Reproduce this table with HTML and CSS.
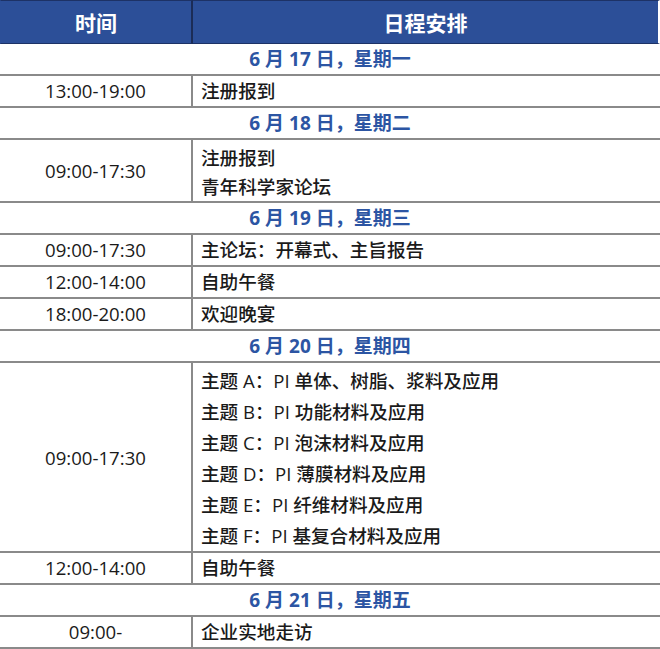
FILE: index.html
```html
<!DOCTYPE html>
<html lang="zh-CN">
<head>
<meta charset="utf-8">
<title>日程安排</title>
<link rel="stylesheet" href="styles.css">
</head>
<body>
<table class="schedule">
  <colgroup><col class="c-time"><col class="c-items"></colgroup>
  <thead>
    <tr><th class="h-time">时间</th><th class="h-items">日程安排</th></tr>
  </thead>
  <tbody>
    <tr class="day"><td colspan="2">6 月 17 日，星期一</td></tr>
    <tr class="single"><td class="time">13:00-19:00</td><td class="items">注册报到</td></tr>

    <tr class="day"><td colspan="2">6 月 18 日，星期二</td></tr>
    <tr><td class="time">09:00-17:30</td><td class="items multi two"><div class="item">注册报到</div><div class="item">青年科学家论坛</div></td></tr>

    <tr class="day"><td colspan="2">6 月 19 日，星期三</td></tr>
    <tr class="single"><td class="time">09:00-17:30</td><td class="items">主论坛：开幕式、主旨报告</td></tr>
    <tr class="single"><td class="time">12:00-14:00</td><td class="items">自助午餐</td></tr>
    <tr class="single"><td class="time">18:00-20:00</td><td class="items">欢迎晚宴</td></tr>

    <tr class="day"><td colspan="2">6 月 20 日，星期四</td></tr>
    <tr><td class="time">09:00-17:30</td><td class="items multi six">
      <div class="item">主题 A：PI 单体、树脂、浆料及应用</div>
      <div class="item">主题 B：PI 功能材料及应用</div>
      <div class="item">主题 C：PI 泡沫材料及应用</div>
      <div class="item">主题 D：PI 薄膜材料及应用</div>
      <div class="item">主题 E：PI 纤维材料及应用</div>
      <div class="item">主题 F：PI 基复合材料及应用</div>
    </td></tr>
    <tr class="single"><td class="time">12:00-14:00</td><td class="items">自助午餐</td></tr>

    <tr class="day"><td colspan="2">6 月 21 日，星期五</td></tr>
    <tr class="single"><td class="time">09:00-</td><td class="items">企业实地走访</td></tr>
  </tbody>
</table>
</body>
</html>
```

FILE: styles.css
```css
html, body {
  margin: 0;
  padding: 0;
  background: #ffffff;
}

body {
  font-family: "Open Sans", "Noto Sans CJK SC", sans-serif;
  color: #1a1a1a;
}

.schedule {
  width: 660px;
  table-layout: fixed;
  border-collapse: separate;
  border-spacing: 0;
}

.c-time { width: 193px; }

.schedule th {
  height: 42px;
  padding: 0;
  background: #2c4f98;
  color: #ffffff;
  font-size: 21px;
  font-weight: 700;
  text-align: center;
  vertical-align: middle;
  border-top: 1px solid #1d3266;
  border-bottom: 1px solid #1d3266;
}

.schedule th.h-time {
  border-right: 2px solid #1b2c57;
  border-left: 1px solid #2c4f98;
}

.schedule th.h-items {
  border-right: 2px solid #ffffff;
}

.schedule td {
  padding: 0;
  font-size: 18.6px;
  font-weight: 500;
  border-bottom: 2px solid #8a8a8a;
}

.day td {
  height: 30px;
  line-height: 30px;
  text-align: center;
  font-size: 19px;
  font-weight: 700;
  color: #2c55a3;
}

.single td {
  height: 30px;
  line-height: 30px;
}

.time {
  text-align: center;
  vertical-align: middle;
  border-right: 2px solid #8a8a8a;
}

.items {
  padding-left: 8px !important;
  vertical-align: middle;
}

.items.multi {
  padding-bottom: 0;
}

.two {
  padding-top: 3px !important;
}

.two .item {
  line-height: 29px;
}

.six {
  padding-top: 2px !important;
}

.six .item {
  line-height: 31px;
}
```
